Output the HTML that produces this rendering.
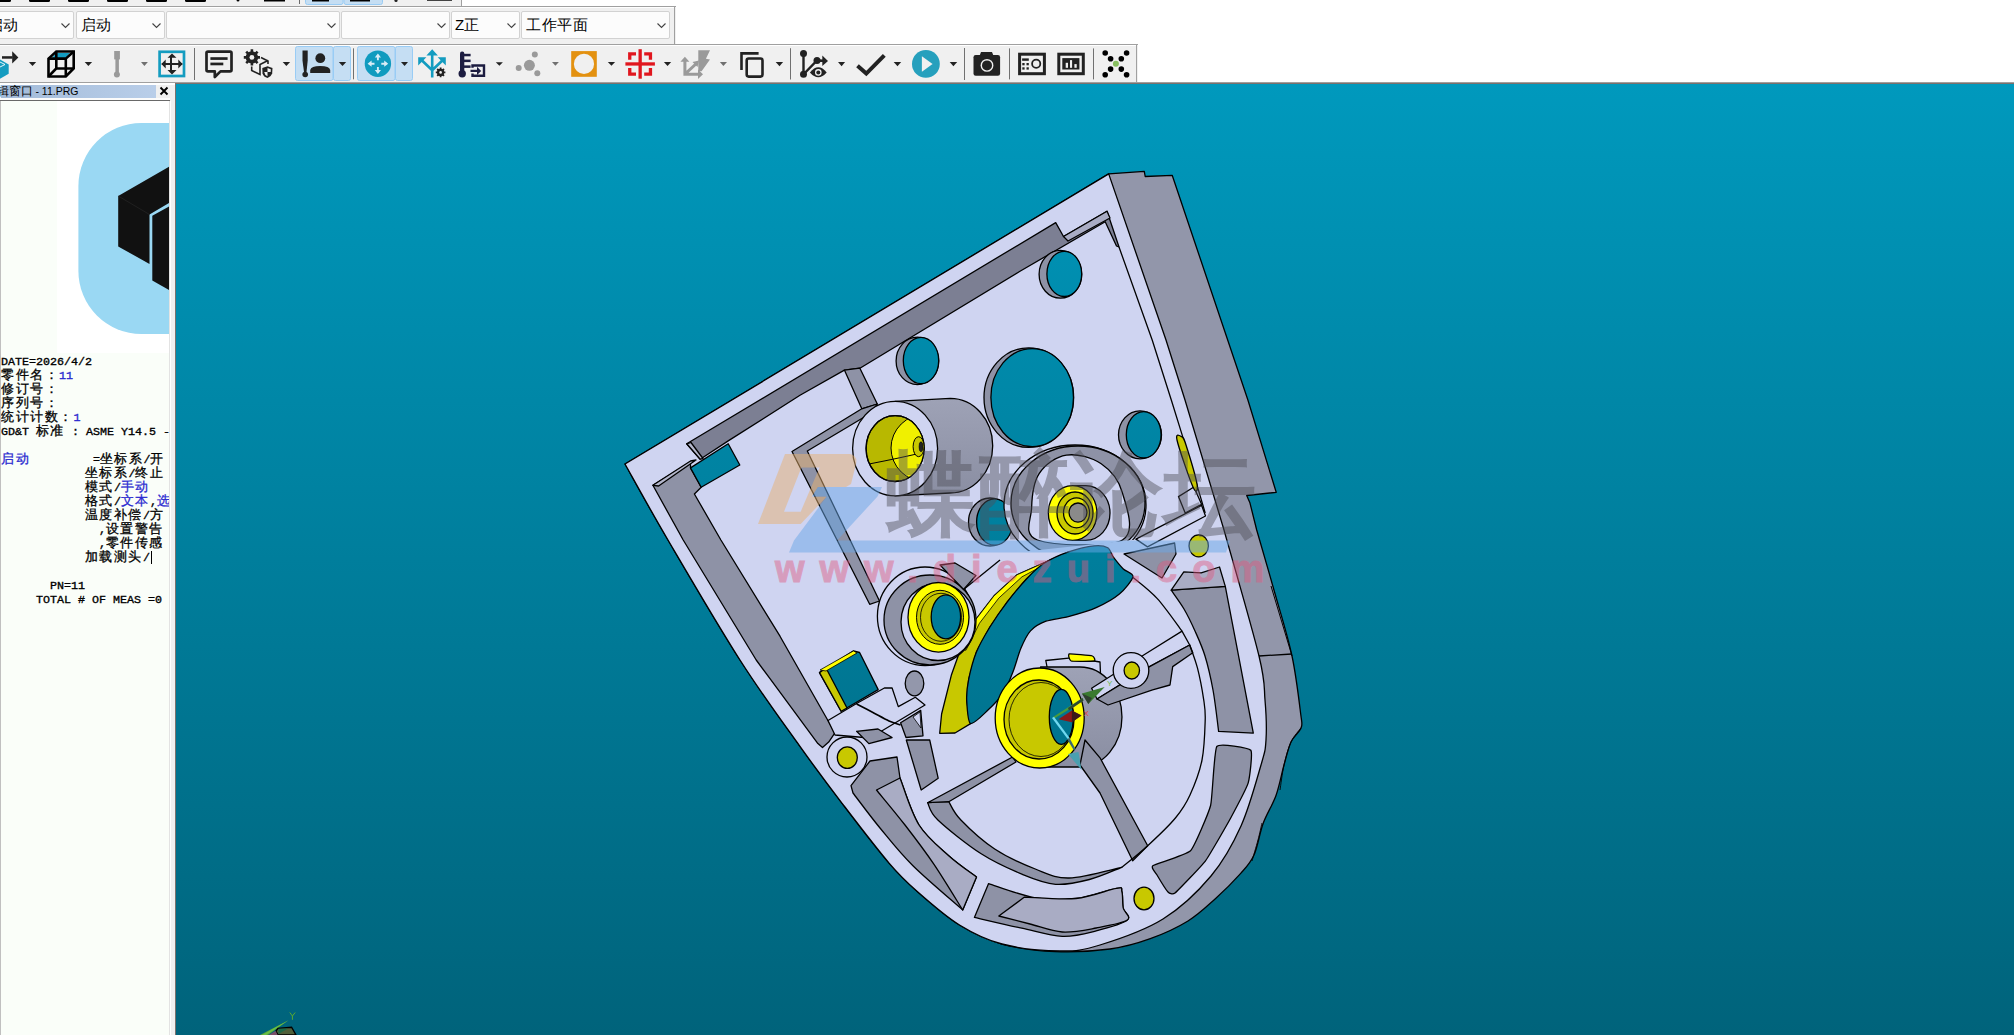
<!DOCTYPE html>
<html><head><meta charset="utf-8">
<style>
*{box-sizing:border-box}
html,body{margin:0;padding:0}
body{width:2014px;height:1035px;overflow:hidden;position:relative;background:#fff;font-family:"Liberation Sans",sans-serif}
.a{position:absolute}
#tb0{left:0;top:0;width:462px;height:6px;background:#f0f0f0;border-right:1px solid #a0a0a0}
#tb1{left:0;top:6px;width:676px;height:38px;background:#f0f0f0;border-top:1px solid #a0a0a0}
#tb1r{left:674px;top:7px;width:1px;height:37px;background:#a0a0a0}
#tb2{left:0;top:44px;width:1138px;height:38px;background:#f0f0f0;border-top:1px solid #a0a0a0}
#tb2r{left:1136px;top:45px;width:1px;height:37px;background:#a0a0a0}
.cb{position:absolute;top:11px;height:28px;background:#fcfcfc;border:1px solid #d2d2d2;border-radius:2px;font-size:15px;line-height:26px;padding-left:4px;color:#000;white-space:nowrap;overflow:hidden}
.chev{position:absolute;right:3.5px;top:9px;width:9px;height:9px}
#line82{left:0;top:82px;width:2014px;height:1px;background:#a0a0a0}
#panel{left:0;top:83px;width:176px;height:952px;background:#f0f0f0}
#view{left:175px;top:83px;width:1839px;height:952px;background:#7b716d}
#vg{left:1px;top:1px;width:1838px;height:951px;background:linear-gradient(#0099bd,#00637b)}
#part{position:absolute;left:0;top:0}
#code{left:1px;top:355px;width:168px;overflow:hidden;font-family:"Liberation Mono",monospace;font-size:11.67px;line-height:14px;color:#000;-webkit-text-stroke:0.35px}
#code div{height:14px;white-space:pre}
#code b{font-weight:normal;letter-spacing:1.5px;font-size:12.5px;-webkit-text-stroke:0.3px}
#code i{font-style:normal;color:#2a2ad0}
</style></head><body>
<div id="tb0" class="a"></div>
<div id="tb1" class="a"></div>
<div id="tb1r" class="a"></div>
<div id="tb2" class="a"></div>
<div id="tb2r" class="a"></div>
<div id="line82" class="a"></div>
<div class="a" style="left:0;top:45px;width:1136px;height:1px;background:#fff"></div>
<div class="a" style="left:0;top:7px;width:674px;height:1px;background:#fff"></div>
<div class="cb" style="left:-2px;width:76px"><span style="position:absolute;left:-11px">启动</span><svg class="chev" viewBox="0 0 9 9"><path d="M0.5,2.5 L4.5,6.5 L8.5,2.5" fill="none" stroke="#444" stroke-width="1.1"/></svg></div>
<div class="cb" style="left:76px;width:89px">启动<svg class="chev" viewBox="0 0 9 9"><path d="M0.5,2.5 L4.5,6.5 L8.5,2.5" fill="none" stroke="#444" stroke-width="1.1"/></svg></div>
<div class="cb" style="left:166px;width:174px"><svg class="chev" viewBox="0 0 9 9"><path d="M0.5,2.5 L4.5,6.5 L8.5,2.5" fill="none" stroke="#444" stroke-width="1.1"/></svg></div>
<div class="cb" style="left:341px;width:109px"><svg class="chev" viewBox="0 0 9 9"><path d="M0.5,2.5 L4.5,6.5 L8.5,2.5" fill="none" stroke="#444" stroke-width="1.1"/></svg></div>
<div class="cb" style="left:451px;width:69px;padding-left:3px">Z正<svg class="chev" viewBox="0 0 9 9"><path d="M0.5,2.5 L4.5,6.5 L8.5,2.5" fill="none" stroke="#444" stroke-width="1.1"/></svg></div>
<div class="cb" style="left:521px;width:149px;letter-spacing:0.5px">工作平面<svg class="chev" viewBox="0 0 9 9"><path d="M0.5,2.5 L4.5,6.5 L8.5,2.5" fill="none" stroke="#444" stroke-width="1.1"/></svg></div>
<svg class="a" style="left:0;top:0" width="1140" height="83" viewBox="0 0 1140 83">
<!-- row0 partial icons -->
<g fill="#000">
<rect x="-3" y="-3" width="14" height="5" rx="1.5"/>
<rect x="29" y="-3" width="21" height="5" rx="1.5"/>
<rect x="68" y="-3" width="21" height="5" rx="1.5"/>
<rect x="107" y="-3" width="21" height="5" rx="1.5"/>
<rect x="146" y="-3" width="21" height="5" rx="1.5"/>
<rect x="185" y="-3" width="21" height="5" rx="1.5"/>
<circle cx="238" cy="0" r="1.5"/>
<rect x="264" y="-3" width="21" height="4.5"/>
</g>
<rect x="299" y="0" width="1" height="4" fill="#6a6a6a"/>
<rect x="305.5" y="-3" width="37.5" height="7.5" rx="2" fill="#c5def3" stroke="#99ccf5" stroke-width="1"/>
<rect x="344" y="-3" width="38.5" height="7.5" rx="2" fill="#c5def3" stroke="#99ccf5" stroke-width="1"/>
<rect x="312" y="-3" width="17" height="4.5" fill="#000"/>
<rect x="350" y="-3" width="20" height="4.5" fill="#000"/>
<circle cx="396" cy="0.5" r="1.6" fill="#222"/>
<rect x="427" y="-3" width="25" height="4" fill="#444"/>
<!-- row2 icons -->
<g fill="#222">
<path fill="#149cc0" d="M0,59.4 L8.7,64.4 L8.7,73.8 L0,78.8 Z"/>
<path fill="none" stroke="#fff" stroke-width="0.9" d="M0,62 L5,64.5 L0,67"/>
<rect x="2" y="56.2" width="10.5" height="2.5"/>
<path d="M12.2,51.2 L18.4,57.4 L12.2,63.6 Z"/>
<path d="M28.8,61.9 L36.2,61.9 L32.5,65.9 Z"/>
<path fill="#149cc0" d="M51.1,58.9 L56.1,53 L70,53 L64.5,58.9 Z"/>
<g fill="none" stroke="#000" stroke-width="2.6" stroke-linejoin="miter">
<path d="M48.5,58.6 L56.3,51.5 L73.7,51.5 L73.7,68.5 L65.8,76.5 L48.5,76.5 Z"/>
<path d="M48.5,58.6 L65.8,58.6 L65.8,76.5 M65.8,58.6 L73.7,51.5"/>
<path d="M56.3,51.5 L56.3,68.5 L48.5,76.5 M56.3,68.5 L73.7,68.5"/>
</g>
<path d="M84.7,61.9 L92.1,61.9 L88.4,65.9 Z"/>
<g fill="#9a9a9a"><rect x="114.2" y="51" width="5.7" height="8.4"/><rect x="115.4" y="59" width="3.5" height="13"/><circle cx="116.9" cy="74.5" r="3"/></g>
<path fill="#707070" d="M141,61.9 L147.9,61.9 L144.4,65.9 Z"/>
<rect x="159.6" y="51.8" width="24.4" height="24.2" fill="none" stroke="#149cc0" stroke-width="2.7"/>
<path d="M171,56.8 L171,71 M161.8,63.9 L182.2,63.9" stroke="#222" stroke-width="2"/>
<path d="M167.5,57.7 L172,53.4 L176.5,57.7 Z M167.5,70.1 L172,74.4 L176.5,70.1 Z M165.7,59.4 L161.4,63.9 L165.7,68.4 Z M178.3,59.4 L182.6,63.9 L178.3,68.4 Z"/>
<rect x="194" y="48" width="1" height="32" fill="#707070"/>
<!-- comment -->
<path fill="none" stroke="#222" stroke-width="2.7" stroke-linejoin="round" d="M208,51.6 L230,51.6 Q231.5,51.6 231.5,53 L231.5,70 Q231.5,71.4 230,71.4 L220.5,71.4 L214.8,77 L214.8,71.4 L208,71.4 Q206.5,71.4 206.5,70 L206.5,53 Q206.5,51.6 208,51.6 Z"/>
<rect x="210.4" y="57.2" width="17.2" height="2.7"/>
<rect x="210.4" y="62.6" width="12.9" height="2.7"/>
<!-- gears -->
<circle cx="251.9" cy="57.4" r="6.2"/>
<g stroke="#222" stroke-width="2.6"><path d="M251.9,49.3 L251.9,65.5 M243.8,57.4 L260,57.4 M246.2,51.7 L257.6,63.1 M257.6,51.7 L246.2,63.1"/></g>
<circle cx="251.9" cy="57.4" r="2.4" fill="#f0f0f0"/>
<path fill="none" stroke="#222" stroke-width="1.6" d="M251.7,66.5 L251.7,70.5 L260,74.4 L260,64.5 L268,60.5 M261,57.5 L268,61 L268,64"/>
<path d="M267.5,66.2 L272.5,68 L272.2,73.5 Q271,77 267.5,78 Q263.6,77 262.5,73.5 L262.3,68 Z"/>
<path fill="#f0f0f0" d="M267.5,68 L270.8,69.2 L270.7,72 L267.5,72 Z M267.5,72 L264.2,72 Q264.6,75 267.5,76.2 Z"/>
<path d="M282.7,62.1 L290.1,62.1 L286.4,66.1 Z"/>
<!-- highlighted buttons -->
<g fill="#c5def3" stroke="#99ccf5" stroke-width="1">
<rect x="295.5" y="46.5" width="37.5" height="34" rx="2"/>
<rect x="333.5" y="46.5" width="17" height="34" rx="2"/>
<rect x="357.5" y="46.5" width="37.5" height="34" rx="2"/>
<rect x="395.5" y="46.5" width="17" height="34" rx="2"/>
</g>
<path d="M302.5,50.5 L307.7,50.5 L307.7,60.6 L306.5,72 L304,72 L302.5,60.6 Z"/>
<circle cx="305.2" cy="74.5" r="2.8"/>
<circle cx="320.3" cy="58.2" r="4.9"/>
<path d="M310.2,72.9 L310.2,70 Q311,66 320.2,65.9 Q329.5,66 330.2,70 L330.2,72.9 Z"/>
<path d="M338.8,61.9 L346.2,61.9 L342.5,65.9 Z"/>
<rect x="353" y="48.3" width="1" height="31" fill="#707070"/>
<circle cx="377.9" cy="63.7" r="13.2" fill="#109bbf"/>
<g stroke="#d8ecf6" stroke-width="1.9" fill="none"><path d="M377.9,55 L377.9,60.3 M377.9,67.1 L377.9,72.4 M369.2,63.7 L374.5,63.7 M381.3,63.7 L386.6,63.7"/></g>
<g fill="#d8ecf6"><path d="M374.8,57.4 L377.9,53.4 L381,57.4 Z M374.8,70 L377.9,74 L381,70 Z M371.6,60.6 L367.6,63.7 L371.6,66.8 Z M384.2,60.6 L388.2,63.7 L384.2,66.8 Z"/></g>
<path d="M401,61.9 L408,61.9 L404.6,65.9 Z"/>
<!-- tri arrow -->
<g stroke="#139cc0" stroke-width="2.6" fill="none"><path d="M432.2,54 L432.2,77.4 M432.2,70.3 L421.5,60 M432.2,70.3 L442.9,60"/></g>
<g fill="#139cc0"><path d="M426.4,55.4 L432.2,49.3 L437.9,55.4 Z M418.2,57.2 L426.4,57.2 L418.2,65.6 Z M445.8,57.2 L437.7,57.2 L445.8,65.6 Z"/></g>
<circle cx="440.6" cy="72.4" r="3.6"/>
<g stroke="#222" stroke-width="1.8"><path d="M440.6,67.6 L440.6,77.2 M435.8,72.4 L445.4,72.4 M437.2,69 L444,75.8 M444,69 L437.2,75.8"/></g>
<circle cx="440.6" cy="72.4" r="1.3" fill="#f0f0f0"/>
<!-- thermometer -->
<g fill="#1c1c40"><rect x="460" y="51.4" width="4.3" height="22" rx="2"/><circle cx="462.2" cy="73.7" r="3.7"/>
<rect x="464" y="53.8" width="6.6" height="2.5"/><rect x="464" y="59.6" width="6.6" height="2.5"/><rect x="464" y="65.4" width="6.6" height="2.5"/>
<path fill="none" stroke="#1c1c40" stroke-width="2.4" d="M472.5,67.8 L472.5,65.5 L484,65.5 L484,75.8 L472.5,75.8 L472.5,73.5"/>
<rect x="470.5" y="69.8" width="7.5" height="2.2"/><path d="M477,66.8 L481.2,70.9 L477,75 Z"/></g>
<path d="M495.8,62.2 L502.9,62.2 L499.4,65.8 Z"/>
<!-- grey dots -->
<g fill="#9a9a9a"><circle cx="529.4" cy="65.3" r="5.5"/><circle cx="518.7" cy="68" r="3"/><circle cx="534.8" cy="54.6" r="3"/><circle cx="537.3" cy="73.2" r="3"/></g>
<path fill="#707070" d="M552,62 L558.9,62 L555.4,65.8 Z"/>
<rect x="571.2" y="51.1" width="25.6" height="25.7" fill="#e39110"/>
<circle cx="584" cy="63.9" r="10.1" fill="#f0f0f0"/>
<path d="M607.8,62 L615.1,62 L611.5,65.8 Z"/>
<!-- red crosshair -->
<g fill="#e0161e"><rect x="638.5" y="49.2" width="3.3" height="29.5"/><rect x="625.4" y="62.3" width="29.5" height="3.3"/>
<path d="M628.1,52.2 L636,52.2 L636,55.5 L631.4,55.5 L631.4,59.8 L628.1,59.8 Z"/>
<path d="M652.1,52.2 L644.2,52.2 L644.2,55.5 L648.8,55.5 L648.8,59.8 L652.1,59.8 Z"/>
<path d="M628.1,75.7 L636,75.7 L636,72.4 L631.4,72.4 L631.4,68 L628.1,68 Z"/>
<path d="M652.1,75.7 L644.2,75.7 L644.2,72.4 L648.8,72.4 L648.8,68 L652.1,68 Z"/></g>
<path d="M663.9,62 L671.2,62 L667.5,66.1 Z"/>
<!-- grey axis -->
<g fill="#9a9a9a"><path d="M698.3,50.3 L710,50.3 L705.9,58.7 L710,59.6 L701.6,71.3 L698.3,71.3 Z"/>
<path fill="none" stroke="#9a9a9a" stroke-width="3" d="M684.9,59 L684.9,74.2 L700,74.2 M684.9,74.2 L697,63"/>
<path d="M680.4,61.8 L684.9,56.8 L689.4,61.8 Z M698,69.5 L703,74.2 L698,79 Z M692.5,62 L699,60.5 L697.5,67 Z"/></g>
<path fill="#707070" d="M719.9,62 L727,62 L723.4,66.1 Z"/>
<!-- copy -->
<path fill="none" stroke="#222" stroke-width="2.6" d="M741.5,70.1 L741.5,53.4 L758.6,53.4"/>
<rect x="746.7" y="58.5" width="15.8" height="18.1" rx="2" fill="none" stroke="#222" stroke-width="2.6"/>
<path d="M775.7,62.1 L783.1,62.1 L779.5,66.3 Z"/>
<rect x="790" y="48.2" width="1" height="31.3" fill="#707070"/>
<!-- branch eye -->
<circle cx="803.5" cy="53.4" r="3.5"/><circle cx="803.5" cy="74.3" r="3.5"/><circle cx="817" cy="60.5" r="3.5"/>
<path fill="none" stroke="#222" stroke-width="2.4" d="M803.5,53.4 L803.5,74.3 L817,60.5 L824,60.8"/>
<path d="M822.3,55.5 L828,61 L822.3,66 Z"/>
<path d="M809.9,72.4 Q818.3,62 826.7,72.4 Q818.3,82 809.9,72.4 Z"/>
<circle cx="818.3" cy="72.4" r="3.3" fill="#f0f0f0"/><circle cx="818.3" cy="72.4" r="2" fill="#222"/>
<path d="M838,62.1 L845.1,62.1 L841.6,66.3 Z"/>
<!-- check -->
<path fill="none" stroke="#222" stroke-width="4" d="M857.5,65.8 L866.3,73.6 L884.3,55.4"/>
<path d="M893.7,61.9 L901.2,61.9 L897.5,66.2 Z"/>
<circle cx="925.9" cy="63.9" r="13.9" fill="#26a0bd"/>
<path fill="#f0f0f0" d="M921.9,56.3 L932.6,64.1 L921.9,71.8 Z"/>
<path d="M949.7,61.9 L957.2,61.9 L953.4,66.2 Z"/>
<rect x="964" y="48" width="1" height="32" fill="#707070"/>
<!-- camera -->
<rect x="973.5" y="55.1" width="26.6" height="20.7" rx="2.2"/>
<path d="M979.5,56 L981,52 L992,52 L993.6,56 Z"/>
<circle cx="987" cy="65.4" r="6.4" fill="#f0f0f0"/><circle cx="987" cy="65.4" r="5" fill="#222"/>
<rect x="1009" y="48.4" width="1" height="31" fill="#707070"/>
<!-- frame icons -->
<rect x="1019.6" y="54.2" width="24.8" height="19.5" fill="none" stroke="#222" stroke-width="3"/>
<rect x="1022.1" y="58.4" width="6.7" height="2.4"/>
<rect x="1022.3" y="63" width="2.3" height="2.3"/><rect x="1026.5" y="63" width="2.3" height="2.3"/>
<rect x="1022.3" y="67.3" width="2.3" height="2.3"/><rect x="1026.5" y="67.3" width="2.3" height="2.3"/>
<circle cx="1036.2" cy="63.8" r="4.1" fill="none" stroke="#222" stroke-width="1.8"/>
<rect x="1058.8" y="54.2" width="24.5" height="19.5" fill="none" stroke="#222" stroke-width="3"/>
<rect x="1062.3" y="58.1" width="17.1" height="11.4"/>
<g fill="#f0f0f0"><rect x="1065.7" y="62.8" width="2.3" height="5"/><rect x="1070" y="60.1" width="2.1" height="7.7"/><rect x="1074.4" y="64.1" width="2.3" height="3.7"/></g>
<rect x="1093" y="48.4" width="1" height="31" fill="#707070"/>
<g fill="#000"><circle cx="1105.2" cy="53" r="2.8"/><circle cx="1126.6" cy="53" r="2.8"/><circle cx="1110.6" cy="58.7" r="2.8"/><circle cx="1121.3" cy="58.7" r="2.8"/>
<circle cx="1110.6" cy="69.1" r="2.8"/><circle cx="1121.3" cy="69.1" r="2.8"/><circle cx="1105.2" cy="74.8" r="2.8"/><circle cx="1126.6" cy="74.8" r="2.8"/></g>
<circle cx="1115.9" cy="63.8" r="3" fill="#88c060"/>
</g>
</svg>
<div id="panel" class="a"></div>
<div class="a" style="left:0;top:83px;width:175px;height:2px;background:#fff"></div>
<div class="a" style="left:1px;top:85px;width:155px;height:13px;background:linear-gradient(90deg,#a3bbd9,#b9cee9)"></div>
<div class="a" style="left:0;top:98px;width:170px;height:2px;background:#fbfbfb"></div>
<div class="a" style="left:-15.5px;top:84px;height:15px;font-size:10.5px;line-height:15px;color:#000;white-space:nowrap;font-family:'Liberation Sans',sans-serif"><span style="font-size:12px">编辑窗口</span> - 11.PRG</div>
<svg class="a" style="left:159px;top:86px" width="10" height="10" viewBox="0 0 10 10"><path d="M1.5,1.5 L8.5,8.5 M8.5,1.5 L1.5,8.5" stroke="#000" stroke-width="1.9"/></svg>
<div class="a" style="left:0;top:100px;width:170px;height:1px;background:#696969"></div>
<div class="a" style="left:0;top:101px;width:1px;height:934px;background:#c0c0c0"></div>
<div class="a" style="left:1px;top:101px;width:168px;height:934px;background:#fafef9"></div>
<div class="a" style="left:169px;top:101px;width:1px;height:934px;background:#e3e3e3"></div>
<div class="a" style="left:170px;top:101px;width:1px;height:934px;background:#fff"></div>
<div class="a" style="left:57px;top:101px;width:112px;height:252px;background:#fff;overflow:hidden">
<svg width="112" height="252" viewBox="57 101 112 252">
<rect x="78.4" y="123" width="160" height="211" rx="63" ry="63" fill="#9ad8f3"/>
<path fill="#111" d="M118.2,196 L169,166.8 L169,203 L149.5,214.5 L149.5,264 L118.2,246.4 Z"/>
<path fill="#111" d="M152.3,215.7 L169,206.6 L169,290 L152.3,280.5 Z"/>
<path fill="none" stroke="#2a2a2a" stroke-width="0.6" d="M118.2,196 L149.5,214.5"/>
</svg>
</div>
<div id="code" class="a">
<div>DATE=2026/4/2</div>
<div><b>零件名：</b><i>11</i></div>
<div><b>修订号：</b></div>
<div><b>序列号：</b></div>
<div><b>统计计数：</b><i>1</i></div>
<div>GD&amp;T <b>标准</b> : ASME Y14.5 -</div>
<div>&nbsp;</div>
<div><i><b>启动</b></i>         =<b>坐标系</b>/<b>开</b></div>
<div>            <b>坐标系</b>/<b>终止</b></div>
<div>            <b>模式</b>/<i><b>手动</b></i></div>
<div>            <b>格式</b>/<i><b>文本</b></i>,<i><b>选</b></i></div>
<div>            <b>温度补偿</b>/<b>方</b></div>
<div>              ,<b>设置警告</b></div>
<div>              ,<b>零件传感</b></div>
<div>            <b>加载测头</b>/<span style="display:inline-block;width:1px;height:13px;background:#000;vertical-align:-3px;margin-left:1px"></span></div>
<div>&nbsp;</div>
<div>       PN=11</div>
<div>     TOTAL # OF MEAS =0</div>
</div>
<div id="view" class="a"><div id="vg" class="a"></div></div>
<svg id="part" width="2014" height="1035" viewBox="0 0 2014 1035">
<defs>
<linearGradient id="tg" gradientUnits="userSpaceOnUse" x1="0" y1="84" x2="0" y2="1035"><stop offset="0" stop-color="#0099bd"/><stop offset="1" stop-color="#00637b"/></linearGradient>
<linearGradient id="yg" x1="0" y1="0" x2="1" y2="0"><stop offset="0" stop-color="#b4b400"/><stop offset="0.55" stop-color="#e0e000"/><stop offset="1" stop-color="#ffff30"/></linearGradient>
<linearGradient id="cyl" x1="0" y1="0" x2="0" y2="1"><stop offset="0" stop-color="#9ea2b6"/><stop offset="1" stop-color="#8a8ea2"/></linearGradient>
</defs>
<g stroke="#000" stroke-width="1.3" stroke-linejoin="round">
<path fill="#9296aa" d="M625.0,464.0 L1108.7,173.9 L1144.3,171.3 L1145.2,176.5 L1172.2,175.3 L1247.9,400.0 L1276.2,492.3 L1246.7,495.5 L1249.8,502.4 L1256.7,530.0 C1259.7,540.4 1268.7,571.2 1274.6,592.2 C1280.5,613.2 1287.7,635.7 1292.0,656.0 C1296.3,676.3 1299.2,702.0 1300.7,714.0 C1302.2,726.0 1302.6,723.3 1301.0,728.0 C1299.4,732.7 1293.8,735.8 1291.0,742.0 C1288.2,748.2 1286.5,756.1 1284.0,765.0 C1281.5,773.9 1279.5,785.8 1276.0,795.5 C1272.5,805.2 1267.0,813.1 1263.3,823.0 C1259.6,832.9 1257.8,846.6 1254.0,855.0 C1250.2,863.4 1247.1,866.1 1240.7,873.4 C1234.3,880.6 1224.4,890.6 1215.6,898.5 C1206.8,906.4 1198.9,914.3 1188.0,921.0 C1177.1,927.7 1163.3,934.0 1150.3,938.7 C1137.3,943.4 1125.9,946.9 1110.0,949.0 C1094.1,951.1 1073.0,952.4 1055.0,951.6 C1037.0,950.8 1017.9,948.4 1002.0,944.0 C986.1,939.6 973.3,933.5 959.5,925.0 C945.7,916.5 930.7,903.3 919.0,893.0 C907.3,882.7 902.0,878.2 889.3,863.3 C876.5,848.4 857.4,823.3 842.5,803.8 C827.6,784.3 817.1,770.4 800.0,746.4 C782.9,722.4 762.0,694.4 740.0,660.0 C718.0,625.6 687.2,572.7 668.0,540.0 C648.8,507.3 632.2,476.7 625.0,464.0 Z" />
<path fill="#cfd4f1" d="M625.0,464.0 L1108.7,173.9 L1166.0,340.0 L1185.0,400.0 L1224.0,530.0 C1229.8,551.0 1252.2,627.7 1259.0,656.0 C1265.8,684.3 1263.8,686.0 1265.0,700.0 C1266.2,714.0 1266.7,729.2 1266.0,740.0 C1265.3,750.8 1265.2,750.7 1261.0,765.0 C1256.8,779.3 1249.3,807.5 1241.0,826.0 C1232.7,844.5 1224.0,860.5 1211.0,876.0 C1198.0,891.5 1181.5,907.5 1163.0,919.0 C1144.5,930.5 1117.2,939.7 1100.0,945.0 C1082.8,950.3 1076.3,951.2 1060.0,951.0 C1043.7,950.8 1018.8,948.3 1002.0,944.0 C985.2,939.7 973.3,933.5 959.5,925.0 C945.7,916.5 930.7,903.3 919.0,893.0 C907.3,882.7 902.0,878.2 889.3,863.3 C876.5,848.4 857.4,823.3 842.5,803.8 C827.6,784.3 817.1,770.4 800.0,746.4 C782.9,722.4 762.0,694.4 740.0,660.0 C718.0,625.6 687.2,572.7 668.0,540.0 C648.8,507.3 632.2,476.7 625.0,464.0 Z" />
<path fill="none" d="M1119.0,247.0 L1152.2,340.0 L1171.3,400.0 L1182.6,436.4 L1205.2,513.0" />
<path fill="none" d="M1259.0,656.0 L1292.0,654.0" />
<path fill="none" d="M1301.0,728.0 C1299.3,730.3 1293.8,735.8 1291.0,742.0 C1288.2,748.2 1285.8,757.0 1284.0,765.0 C1282.2,773.0 1280.7,785.8 1280.0,790.0" stroke-width="0.9"/>
<path fill="none" d="M1262.0,823.0 C1261.3,825.8 1259.7,833.7 1258.0,840.0 C1256.3,846.3 1253.0,857.5 1252.0,861.0" stroke-width="0.9"/>
<path fill="#7c7f93" d="M686.7,443.8 L1055.7,222.6 L1063.5,236.5 L1107.0,211.3 L1119.0,247.0 L1116.5,246.0 L1105.2,221.7 L1020.0,271.3 L859.9,368.2 L844.4,370.1 L800.0,395.3 L728.2,440.9 L700.2,459.2 Z" />
<path fill="#a9acc4" d="M1063.5,236.5 L1107.0,211.3 L1110.0,218.0 L1068.0,241.0 Z" />
<path fill="#8e92a6" d="M652.9,485.3 L690.5,462.0 L690.5,467.9 L701.2,487.2 L694.4,494.0 L720.9,540.0 L780.0,636.2 L834.9,732.8 L828.7,742.1 L822.5,747.5 L817.9,743.6 L770.0,678.7 L756.2,660.0 L683.2,540.0 Z" />
<path fill="#b4b7cc" d="M652.9,485.3 L690.5,461.0 L696.0,460.0 L658.6,486.0 Z" />
<path fill="#b4b7cc" d="M686.7,443.8 L691.0,442.5 L703.0,458.5 L700.2,459.2 Z" />
<path fill="url(#tg)" d="M690.5,467.9 L728.2,443.8 L739.8,465.0 L701.2,487.2 Z" />
<path fill="#8e92a6" d="M844.4,370.1 L859.9,368.2 L877.3,404.0 L861.8,408.8 Z" />
<path fill="#8e92a6" d="M792.0,451.5 L861.8,408.8 L877.3,404.0 L871.5,412.7 L807.3,451.0 L879.5,601.0 L869.7,604.3 Z" />
<ellipse cx="1060.4" cy="274.3" rx="21.3" ry="23.9" fill="#8e92a6" />
<ellipse cx="1064.3" cy="273.9" rx="17.4" ry="22.6" fill="url(#tg)" />
<ellipse cx="917.4" cy="360.9" rx="21.3" ry="23.7" fill="#8e92a6" />
<ellipse cx="921" cy="360.5" rx="17.7" ry="23.2" fill="url(#tg)" />
<ellipse cx="1028.8" cy="397.6" rx="44.8" ry="49.8" fill="#8e92a6" />
<ellipse cx="1032.2" cy="397.6" rx="41.3" ry="49" fill="url(#tg)" />
<ellipse cx="1140" cy="434.8" rx="21.5" ry="24" fill="#8e92a6" />
<ellipse cx="1143.7" cy="434.8" rx="17.4" ry="23.2" fill="url(#tg)" />
<ellipse cx="990" cy="522" rx="21.5" ry="24" fill="#8e92a6" />
<ellipse cx="994.6" cy="522" rx="18" ry="23.2" fill="url(#tg)" />
<path fill="url(#cyl)" d="M895.1,401.3 L950.2,398.4 A42.5,47.3 0 0 1 950.2,493 L895.1,495.9 Z" />
<ellipse cx="895.1" cy="448.6" rx="42.5" ry="47.3" fill="#cfd4f1" />
<clipPath id="b1c"><ellipse cx="895.1" cy="448.6" rx="29" ry="32.9"/></clipPath>
<ellipse cx="895.1" cy="448.6" rx="29" ry="32.9" fill="#b8b800" />
<g clip-path="url(#b1c)"><ellipse cx="926" cy="448" rx="35" ry="34" fill="#f0f000" stroke-width="1"/></g>
<ellipse cx="895.1" cy="448.6" rx="29" ry="32.9" fill="none" />
<path fill="none" d="M869,464 Q900,458 923,452.5" stroke-width="1"/>
<ellipse cx="918.6" cy="446.7" rx="5.5" ry="10" fill="#c8c800" stroke-width="1"/>
<ellipse cx="921" cy="446.7" rx="2" ry="5" fill="#222" stroke-width="0.5"/>
<clipPath id="b2c"><polygon points="990,430 1160,430 1160,537 1012,553 990,553"/></clipPath>
<g clip-path="url(#b2c)"><ellipse cx="1075" cy="505" rx="71" ry="60" fill="#cfd4f1" /><path fill="#8e92a6" d="M1011,503 A67,57 0 1 1 1145,503 A67,57 0 1 1 1011,503 Z M1031.6,508.2 C1031.9,497.1 1033.5,482.2 1039.3,473.4 C1045.1,464.5 1056.1,456.7 1066.4,455.1 C1076.7,453.5 1091.9,457.5 1101.2,463.8 C1110.5,470.1 1118.9,480.1 1122.4,492.8 C1125.9,505.5 1136.6,532.1 1122.4,540.0 C1108.2,547.9 1052.5,545.3 1037.4,540.0 C1022.3,534.7 1031.3,519.3 1031.6,508.2 Z" fill-rule="evenodd"/></g>
<path fill="#9397ab" d="M1072.6,485.6 L1085.7,485.6 A24.3,27.4 0 0 1 1085.7,540.4 L1072.6,540.4 Z" />
<ellipse cx="1072.6" cy="513" rx="24.3" ry="27.4" fill="#ffff00" />
<ellipse cx="1075" cy="513" rx="18" ry="21" fill="#c8c800" />
<ellipse cx="1076.5" cy="512.8" rx="13" ry="15" fill="#e6e600" />
<ellipse cx="1078" cy="512.6" rx="9" ry="9.6" fill="#8a8a8a" />
<path fill="#cfd4f1" d="M1135.9,539.1 L1201.6,505.3 L1205.5,516.0 L1147.5,546.9 Z" />
<path fill="#cfd4f1" d="M1178.5,496.6 L1193.9,487.0 L1201.6,504.3 L1185.2,513.0 Z" />
<path fill="#8e92a6" d="M1124.0,554.0 L1174.6,543.0 L1176.0,554.0 L1162.0,578.0 Z" />
<path fill="#c8c800" d="M1177.0,440.0 C1175.2,431.7 1180.5,436.2 1182.0,437.0 C1183.5,437.8 1183.5,437.2 1186.0,445.0 C1188.5,452.8 1195.8,477.0 1197.0,484.0 C1198.2,491.0 1196.3,494.3 1193.0,487.0 C1189.7,479.7 1178.8,448.3 1177.0,440.0 Z" />
<path fill="#c8c800" d="M1069.2,551.6 L1017.0,574.8 L993.8,596.1 L974.5,621.2 L960.9,648.3 L951.3,675.3 L941.6,714.0 L939.7,733.3 L955.0,733.0 L970.6,723.6 L966.7,700.4 L968.7,679.2 L976.4,652.1 L989.9,627.0 L1007.3,601.9 L1026.7,578.7 L1044.0,563.2 Z" />
<path fill="#ffff00" d="M1069.2,551.6 L1017.0,574.8 L993.8,596.1 L974.5,621.2 L960.9,648.3 L965.9,650.3 L979.5,623.2 L998.8,598.1 L1022,576.8 Z" stroke-width="0.8"/>
<path fill="url(#tg)" d="M1044.0,563.2 C1049.7,559.6 1062.5,553.9 1069.2,551.6 C1075.9,549.3 1089.2,546.3 1094.3,545.8 C1099.4,545.3 1105.2,546.2 1107.8,547.7 C1110.4,549.2 1111.5,554.6 1113.6,557.4 C1115.7,560.2 1120.7,566.4 1123.3,569.0 C1125.9,571.6 1133.5,573.4 1133.0,576.7 C1132.5,580.0 1124.3,590.0 1119.4,594.1 C1114.5,598.2 1102.9,604.7 1096.2,607.7 C1089.5,610.7 1075.9,614.6 1069.2,616.4 C1062.5,618.2 1051.2,619.3 1046.0,621.2 C1040.8,623.1 1033.8,627.3 1030.5,630.9 C1027.2,634.5 1023.2,642.9 1020.9,648.3 C1018.6,653.7 1015.4,665.6 1013.1,671.5 C1010.8,677.4 1006.8,687.6 1003.5,692.7 C1000.2,697.8 992.4,706.0 988.0,710.1 C983.6,714.2 973.4,724.9 970.6,723.6 C967.8,722.3 967.0,706.3 966.7,700.4 C966.4,694.5 967.4,685.6 968.7,679.2 C970.0,672.8 973.6,659.1 976.4,652.1 C979.2,645.1 985.8,633.7 989.9,627.0 C994.0,620.3 1002.4,608.3 1007.3,601.9 C1012.2,595.5 1021.8,583.9 1026.7,578.7 C1031.6,573.5 1038.3,566.8 1044.0,563.2 Z" />
<ellipse cx="925" cy="616.3" rx="47.6" ry="49.3" fill="#cfd4f1" />
<ellipse cx="930" cy="620" rx="46" ry="45" fill="#8e92a6" />
<ellipse cx="938" cy="622" rx="37" ry="38.5" fill="#cfd4f1" />
<ellipse cx="938.5" cy="617.3" rx="30.5" ry="34.8" fill="#ffff00" />
<ellipse cx="940" cy="617.3" rx="23.5" ry="27" fill="#c8c800" stroke-width="1"/>
<ellipse cx="941" cy="617.3" rx="20.5" ry="24" fill="#c8c800" stroke-width="0.8"/>
<ellipse cx="945.9" cy="616.9" rx="14.7" ry="22" fill="url(#tg)" />
<path fill="#8e92a6" d="M940.0,565.0 L955.0,563.0 L976.0,575.5 L963.6,589.5 Z" />
<path fill="none" d="M963.6,589.5 L1000.0,560.0" />
<path fill="url(#tg)" d="M819.5,672.6 L853.5,650.9 L859.6,652.5 L878.2,689.6 L841.1,711.2 Z" />
<path fill="#c8c800" d="M819.5,672.6 L826.0,668.0 L847.0,708.0 L841.1,711.2 Z" />
<path fill="#ffff00" d="M820.0,670.0 L853.5,650.9 L857.0,653.0 L826.0,671.0 Z" stroke-width="0.8"/>
<path fill="#cfd4f1" d="M828.0,720.5 L856.6,703.5 L884.4,688.0 L892.1,688.0 L898.3,706.6 L915.3,697.3 L925.0,705.0 L870.0,738.0 L835.0,735.0 Z" />
<ellipse cx="914.5" cy="683.4" rx="9.3" ry="12.4" fill="#9397ab" />
<path fill="#8e92a6" d="M856.6,731.3 L878.0,729.0 L892.1,737.5 L868.9,743.6 Z" />
<path fill="none" d="M856.6,704.0 C859.2,705.3 866.6,709.2 872.0,712.0 C877.4,714.8 884.2,718.8 889.0,721.0 C893.8,723.2 898.7,724.3 900.6,725.0" stroke-width="1.6"/>
<path fill="#8e92a6" d="M900.6,722.8 L920.7,710.4 L923.0,735.9 L906.0,737.5 Z" />
<path fill="#cfd4f1" d="M913.0,717.0 L920.0,712.0 L921.0,728.0 Z" stroke-width="0.8"/>
<circle cx="847" cy="757" r="20" fill="#cfd4f1"/>
<ellipse cx="847.3" cy="757.6" rx="10" ry="10.8" fill="#c8c800" />
<ellipse cx="1198.7" cy="545.9" rx="9.7" ry="11" fill="#c8c800" />
<path fill="#8e92a6" d="M851.0,785.7 L870.0,761.0 L897.0,757.0 L900.0,778.0 C903.2,785.8 910.8,812.0 919.0,825.0 C927.2,838.0 939.4,847.3 949.0,856.0 C958.6,864.7 971.9,873.5 976.5,877.0 L962.7,910 C954.4,902.6 926.5,879.2 912.7,865.5 C898.9,851.8 890.0,840.1 880.0,828.0 C870.0,815.9 857.5,798.8 853.0,793.0 Z" />
<path fill="#a9acc4" d="M876.5,790.0 L900.0,778.0 C903.2,785.8 910.8,812.0 919.0,825.0 C927.2,838.0 939.4,847.3 949.0,856.0 C958.6,864.7 971.9,873.5 976.5,877.0 L962.7,910 C957.9,902.4 943.6,878.6 934.0,864.4 C924.4,850.2 914.6,837.4 905.0,825.0 C895.4,812.6 881.2,795.8 876.5,790.0 Z" />
<path fill="#8e92a6" d="M974.4,917.4 L988.6,883.6 C996.4,886.0 1020.8,895.3 1035.3,897.8 C1049.8,900.3 1062.4,900.1 1075.9,898.5 C1089.4,896.9 1108.8,889.4 1116.5,888.3 C1124.2,887.2 1120.8,888.4 1121.9,891.7 C1123.0,895.0 1122.3,903.3 1123.2,908.0 C1124.1,912.7 1131.8,916.3 1127.3,920.1 C1122.8,923.9 1107.0,928.2 1096.2,930.9 C1085.4,933.6 1074.7,936.8 1062.3,936.3 C1049.9,935.8 1036.5,931.4 1021.8,928.2 C1007.1,925.1 982.3,919.2 974.4,917.4 Z" />
<path fill="#a9acc4" d="M998.8,916.0 L1024.5,897.1 C1033.1,897.3 1060.6,900.0 1075.9,898.5 C1091.2,897.0 1108.8,889.4 1116.5,888.3 C1124.2,887.2 1120.8,888.4 1121.9,891.7 C1123.0,895.0 1122.3,903.3 1123.2,908.0 C1124.1,912.7 1131.8,916.8 1127.3,920.1 C1122.8,923.4 1107.0,926.0 1096.2,928.0 C1085.4,930.0 1073.3,932.7 1062.3,932.0 C1051.3,931.3 1040.6,926.7 1030.0,924.0 C1019.4,921.3 1004.0,917.3 998.8,916.0 Z" />
<path fill="#8e92a6" d="M1216.8,746.5 C1219.5,742.8 1248.7,747.9 1250.8,750.3 C1252.9,752.7 1249.5,778.4 1248.2,782.9 C1246.9,787.4 1233.5,812.8 1230.7,818.0 C1227.9,823.2 1209.2,855.8 1205.5,860.8 C1201.8,865.8 1177.5,890.9 1175.0,893.0 C1172.5,895.1 1169.2,893.2 1168.0,892.0 C1166.8,890.8 1158.0,876.7 1157.0,875.0 C1156.0,873.3 1150.6,867.4 1152.8,865.8 C1155.0,864.2 1186.6,854.8 1190.5,850.8 C1194.4,846.8 1208.8,812.5 1210.6,805.5 C1212.4,798.5 1214.1,750.2 1216.8,746.5 Z" />
<path fill="#8e92a6" d="M1171.2,590.2 L1225.3,586.4 L1253.3,733.2 L1218.6,731.3 C1217.7,724.4 1215.3,702.5 1213.0,690.0 C1210.7,677.5 1208.0,665.8 1205.0,656.0 C1202.0,646.2 1198.5,638.8 1195.0,631.0 C1191.5,623.2 1188.0,615.8 1184.0,609.0 C1180.0,602.2 1173.3,593.3 1171.2,590.2 Z" />
<path fill="none" d="M1271.0,586.0 L1292.0,656.0" stroke-width="1"/>
<path fill="#a9acc4" d="M1171.2,590.2 L1183.8,571.9 L1201.2,572.9 L1219.5,567.0 L1225.3,586.4 Z" />
<path fill="#8e92a6" d="M927.6,802.7 L948.8,801.7 C950.8,804.8 953.2,812.1 960.9,820.0 C968.5,827.9 982.3,840.8 994.7,849.0 C1007.1,857.2 1022.9,864.2 1035.3,869.0 C1047.7,873.8 1054.7,878.3 1069.1,878.0 C1083.5,877.7 1113.1,869.1 1121.9,867.3 C1116.5,869.3 1100.5,876.7 1089.4,879.5 C1078.4,882.3 1066.9,885.2 1055.6,884.3 C1044.3,883.4 1034.2,879.2 1021.8,874.1 C1009.4,869.0 995.2,862.8 981.2,853.8 C967.2,844.8 946.8,828.5 937.9,820.0 C929.0,811.5 929.3,805.6 927.6,802.7 Z" />
<path fill="#8e92a6" d="M906.3,740.0 L929.7,740.0 L938.2,778.3 L921.2,790.0 Z" />
<path fill="#cfd4f1" d="M1045.8,660.5 L1073.4,657.6 L1100.0,662.0 L1100.5,674.0 L1048.0,672.0 Z" />
<path fill="#ffff00" d="M1069.2,654.0 C1070.6,653.7 1090.7,655.5 1092.4,656.0 C1094.1,656.5 1095.7,660.7 1094.3,661.0 C1092.9,661.3 1072.8,661.5 1071.1,661.0 C1069.4,660.5 1067.8,654.3 1069.2,654.0 Z" />
<path fill="url(#cyl)" d="M1040.6,667 L1080,667 A42,50 0 0 1 1080,767 L1040.6,767 Z" />
<path fill="#8e92a6" d="M1085.0,740.0 L1100.0,757.8 L1147.7,845.7 L1132.7,860.8 L1100.0,793.0 L1080.0,765.0 Z" />
<path fill="#cfd4f1" d="M1091.6,688.3 L1144.9,654.3 L1182.0,631.1 L1189.7,645.0 L1149.6,666.6 L1097.0,699.0 Z" />
<path fill="#8e92a6" d="M1097.0,699.0 L1149.6,666.6 L1189.7,645.0 L1192.8,652.7 L1172.7,666.6 L1170.0,685.0 L1152.6,689.8 L1108.0,705.0 Z" />
<circle cx="1131" cy="670.5" r="17.8" fill="#cfd4f1"/>
<ellipse cx="1131.8" cy="670.5" rx="7.7" ry="8.5" fill="#c8c800" />
<path fill="#8e92a6" d="M927.6,802.7 L1012.6,757.0 L1016.0,762.0 L948.8,801.7 Z" />
<ellipse cx="1039.7" cy="718" rx="44.5" ry="50" fill="#ffff00" />
<ellipse cx="1039" cy="719.5" rx="35" ry="39.5" fill="#c8c800" />
<ellipse cx="1041" cy="719.5" rx="32" ry="37" fill="#c8c800" stroke-width="0.8"/>
<ellipse cx="1061.3" cy="716.9" rx="12" ry="27.5" fill="url(#tg)" />
<ellipse cx="1144" cy="898.5" rx="10" ry="11.3" fill="#c8c800" />
<path fill="none" d="M1132.5,577.0 C1136.6,580.6 1149.0,589.6 1157.3,598.6 C1165.5,607.6 1177.9,625.7 1182.0,631.1" />
<path fill="none" d="M1189.7,645.0 C1191.0,648.9 1195.2,659.2 1197.5,668.2 C1199.8,677.2 1202.3,690.5 1203.6,699.1 C1204.9,707.7 1205.5,709.9 1205.2,720.0 C1204.9,730.1 1204.5,747.5 1202.0,760.0 C1199.5,772.5 1194.4,785.3 1190.0,795.0 C1185.6,804.7 1182.5,809.5 1175.4,818.0 C1168.4,826.5 1156.6,837.5 1147.7,845.7 C1138.8,853.9 1126.2,863.7 1121.9,867.3" />
</g>
<g stroke="none">
<path d="M1052.6,717.3 L1082.5,698 L1083.5,700.5 L1053.5,719 Z" fill="#4a9a3a"/>
<path d="M1068,708 L1082.5,698 L1083.5,700.5 L1069,710.5 Z" fill="#2f4a30"/>
<path d="M1082,693.5 L1088.3,704 L1104.7,686.9 Z" fill="#3a7a30"/>
<path d="M1082,693.5 L1088.3,704 L1092,698 Z" fill="#2f3f2f"/>
<path d="M1058.4,719.3 L1071.9,710.6 L1081.5,715.4 L1071.9,722.2 Z" fill="#8a1a1a"/>
<path d="M1071.9,710.6 L1081.5,715.4 L1071.9,722.2 Z" fill="#3a1a1a"/>
<path d="M1052,718 L1068,739.6 L1070,738.5 L1054,716.8 Z" fill="#70d8f0"/>
<path d="M1067,739 L1073.8,750.2 L1075.5,749 L1069.5,738 Z" fill="#3a6a70"/>
<path d="M1068,754 L1078.5,752 L1081.5,770 Z" fill="#4aa0b0"/>
</g>
<text x="1107" y="686" font-family="Liberation Sans" font-size="8" fill="#6ab84a">Y</text>
<text x="1083.5" y="716" font-family="Liberation Sans" font-size="8" fill="#e04040">X</text>
<polygon points="260,1035 288.5,1020.3 268,1035" fill="#5aaa38"/>
<polygon points="262,1035 288.5,1020.3 266,1035" fill="#6ac048"/>
<path d="M276,1031 L278,1028.3 L291.6,1027.3 L296,1035 L278,1035 Z" fill="#50603a" stroke="#000" stroke-width="1.3"/>
<path d="M278.3,1028.8 L288,1028.5 L278.5,1034 Z" fill="#1e6a48"/>
<path d="M268.6,1035 L275.5,1031 L277.7,1035 Z" fill="#7a5068"/>
<path d="M289.8,1012.5 L292.4,1016 L295.2,1012.5 M292.4,1016 L292.4,1019.8" stroke="#5aaa30" stroke-width="1" fill="none"/>
</svg><svg id="wm" style="position:absolute;left:0;top:0" width="2014" height="1035" viewBox="0 0 2014 1035">
<g opacity="0.5">
<path fill="#e8b272" fill-rule="evenodd" d="M758,524 L785,454 L850,454 Q858,456 856,464 L851,484 L846,487 L818,487 L812,496.5 L826.8,496.5 L800.7,524 Z M784,511.7 L801.4,467.5 L819.6,467.5 L810.9,487.8 L800.7,511.7 Z"/>
<path fill="#6aa8e8" d="M818,487 L882,487 L877.5,496.5 L837,540.5 L1230,540.5 L1226,552.5 L789,552.5 L794,540.5 L826.8,496.5 L812,496.5 Z"/>
</g>
<text x="885" y="526" font-family="Liberation Sans" font-weight="bold" font-size="92" letter-spacing="1" fill="#50505a" opacity="0.45">蝶醉论坛</text>
<text x="775" y="582" font-family="Liberation Sans" font-weight="bold" font-size="38" letter-spacing="15" fill="#e05a80" stroke="#e05a80" stroke-width="1" opacity="0.45">www.diezui.com</text>
</svg>

</body></html>
